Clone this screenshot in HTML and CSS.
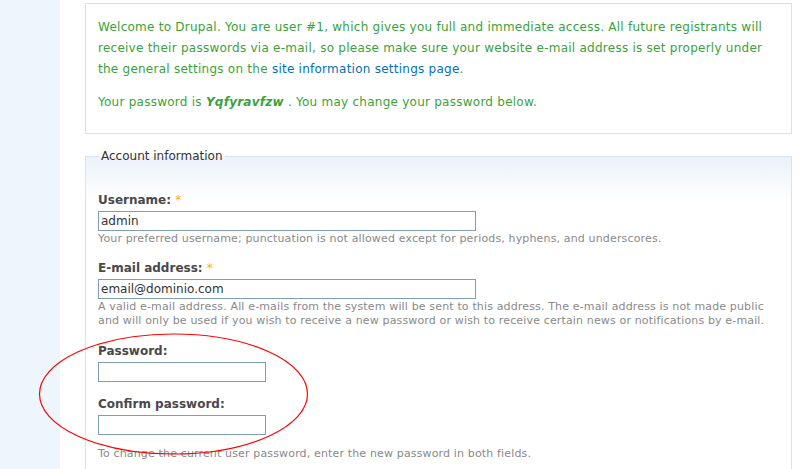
FILE: index.html
```html
<!DOCTYPE html>
<html lang="en">
<head>
    <meta charset="UTF-8">
    <title>My account</title>
    <link rel="stylesheet" href="styles.css">
</head>
<body>

    <div class="page">
        <div class="sidebar"></div>

        <div class="content">
            <div class="messages status">
                <p>Welcome to Drupal. You are user #1, which gives you full and immediate access. All future registrants will receive their passwords via e-mail, so please make sure your website e-mail address is set properly under the general settings on the <a href="#">site information settings page</a>.</p>
                <p>Your password is <em class="placeholder">Yqfyravfzw</em> . You may change your password below.</p>
            </div>

            <form class="user-form">
                <fieldset>
                    <legend>Account information</legend>

                    <div class="form-item item-name">
                        <label for="edit-name">Username: <span class="form-required">*</span></label>
                        <input type="text" id="edit-name" class="form-text" value="admin">
                        <div class="description">Your preferred username; punctuation is not allowed except for periods, hyphens, and underscores.</div>
                    </div>

                    <div class="form-item item-mail">
                        <label for="edit-mail">E-mail address: <span class="form-required">*</span></label>
                        <input type="text" id="edit-mail" class="form-text" value="email@dominio.com">
                        <div class="description">A valid e-mail address. All e-mails from the system will be sent to this address. The e-mail address is not made public and will only be used if you wish to receive a new password or wish to receive certain news or notifications by e-mail.</div>
                    </div>

                    <div class="form-item item-pass">
                        <label for="edit-pass1">Password:</label>
                        <input type="password" id="edit-pass1" class="form-text short">
                    </div>

                    <div class="form-item item-pass2">
                        <label for="edit-pass2">Confirm password:</label>
                        <input type="password" id="edit-pass2" class="form-text short">
                    </div>

                    <div class="description pass-desc">To change the current user password, enter the new password in both fields.</div>
                </fieldset>
            </form>
        </div>

        <!-- hand drawn highlight round the password fields -->
        <svg class="highlight" width="812" height="469" viewBox="0 0 812 469">
            <ellipse cx="173.5" cy="394" rx="134" ry="60" fill="none" stroke="#ff0000" stroke-width="1.2"></ellipse>
        </svg>
    </div>

</body>
</html>
```

FILE: styles.css
```css
body {
    margin: 0;
    background: #ffffff;
    font-family: "DejaVu Sans", Verdana, sans-serif;
    font-size: 12px;
    color: #494949;
}
.page {
    position: relative;
    display: flex;
    height: 469px;
    overflow: hidden;
}
.sidebar {
    flex: 0 0 60px;
    background: #edf5fd;
}
.content {
    flex: 0 0 707px;
    padding: 3px 0 0 25px;
}
.messages {
    border: 1px solid #d0ebcc;
    padding: 7px 12px 8px;
    color: #3aa23a;
    line-height: 21px;
    letter-spacing: 0.25px;
}
.messages p {
    margin: 6px 0 12px;
}
.messages a {
    color: #0071b8;
    text-decoration: none;
}
.messages .placeholder {
    font-weight: bold;
    font-style: italic;
}
.user-form fieldset {
    margin: 14px 0 0;
    padding: 27px 12px 0;
    border: 1px solid #d6e4ef;
    background: linear-gradient(to bottom, #ebf2f9 0px, #ffffff 45px);
    min-height: 320px;
}
.user-form legend {
    padding: 0 2px;
    margin-left: 1px;
    line-height: 16px;
    color: #333333;
}
.form-item {
    margin-bottom: 13px;
}
.item-mail {
    margin-bottom: 14px;
}
.form-item label {
    display: block;
    line-height: 18px;
    font-weight: bold;
    margin-bottom: 2px;
}
.form-required {
    color: #ffae00;
    font-weight: normal;
}
.form-text {
    display: block;
    box-sizing: border-box;
    width: 378px;
    height: 20px;
    margin: 0;
    padding: 0 2px;
    border: 1px solid #7f9db9;
    font-family: "DejaVu Sans", Verdana, sans-serif;
    font-size: 12px;
    color: #333333;
    background: #ffffff;
}
.form-text.short {
    width: 168px;
}
.description {
    margin-top: 1px;
    font-size: 11px;
    line-height: 14px;
    letter-spacing: 0.15px;
    color: #898989;
}
.pass-desc {
    margin-top: -1px;
}
.highlight {
    position: absolute;
    left: 0;
    top: 0;
    pointer-events: none;
}
```
